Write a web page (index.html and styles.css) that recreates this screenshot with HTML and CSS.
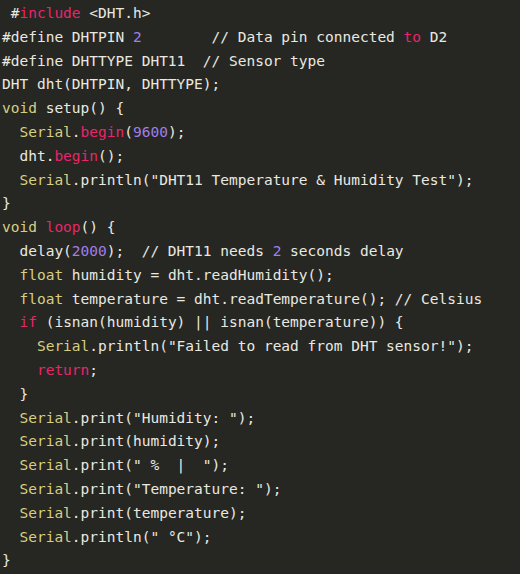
FILE: index.html
```html
<!DOCTYPE html>
<html>
<head>
<meta charset="utf-8">
<link rel="stylesheet" href="styles.css">
</head>
<body>
<div class="code">
<div class="ln"> #<span class="kw">include</span> &lt;DHT.h&gt;</div>
<div class="ln">#define DHTPIN <span class="num">2</span>        // Data pin connected <span class="kw">to</span> D2</div>
<div class="ln">#define DHTTYPE DHT11  // Sensor type</div>
<div class="ln">DHT dht(DHTPIN, DHTTYPE);</div>
<div class="ln"><span class="ty">void</span> setup() {</div>
<div class="ln">  <span class="ty">Serial</span>.<span class="kw">begin</span>(<span class="num">9600</span>);</div>
<div class="ln">  dht.<span class="kw">begin</span>();</div>
<div class="ln">  <span class="ty">Serial</span>.println("DHT11 Temperature &amp; Humidity Test");</div>
<div class="ln">}</div>
<div class="ln"><span class="ty">void</span> <span class="kw">loop</span>() {</div>
<div class="ln">  delay(<span class="num">2000</span>);  // DHT11 needs <span class="num">2</span> seconds delay</div>
<div class="ln">  <span class="ty">float</span> humidity = dht.readHumidity();</div>
<div class="ln">  <span class="ty">float</span> temperature = dht.readTemperature(); // Celsius</div>
<div class="ln">  <span class="kw">if</span> (isnan(humidity) || isnan(temperature)) {</div>
<div class="ln">    <span class="ty">Serial</span>.println("Failed to read from DHT sensor!");</div>
<div class="ln">    <span class="kw">return</span>;</div>
<div class="ln">  }</div>
<div class="ln">  <span class="ty">Serial</span>.print("Humidity: ");</div>
<div class="ln">  <span class="ty">Serial</span>.print(humidity);</div>
<div class="ln">  <span class="ty">Serial</span>.print(" %  |  ");</div>
<div class="ln">  <span class="ty">Serial</span>.print("Temperature: ");</div>
<div class="ln">  <span class="ty">Serial</span>.print(temperature);</div>
<div class="ln">  <span class="ty">Serial</span>.println(" °C");</div>
<div class="ln">}</div>
</div>
</body>
</html>
```
FILE: styles.css
```css
html, body {
  margin: 0;
  padding: 0;
  background: #262622;
}
body {
  width: 520px;
  height: 574px;
  overflow: hidden;
}
.code {
  display: flex;
  flex-direction: column;
  padding: 2px 0 0 2px;
  font-family: "DejaVu Sans Mono", "Liberation Mono", monospace;
  font-size: 14.5px;
  line-height: 23.8px;
  color: #e9e9e1;
}
.ln {
  white-space: pre;
  height: 23.8px;
}
.kw { color: #e8266b; }
.num { color: #a07fe8; }
.ty { color: #d6cf82; }
```
